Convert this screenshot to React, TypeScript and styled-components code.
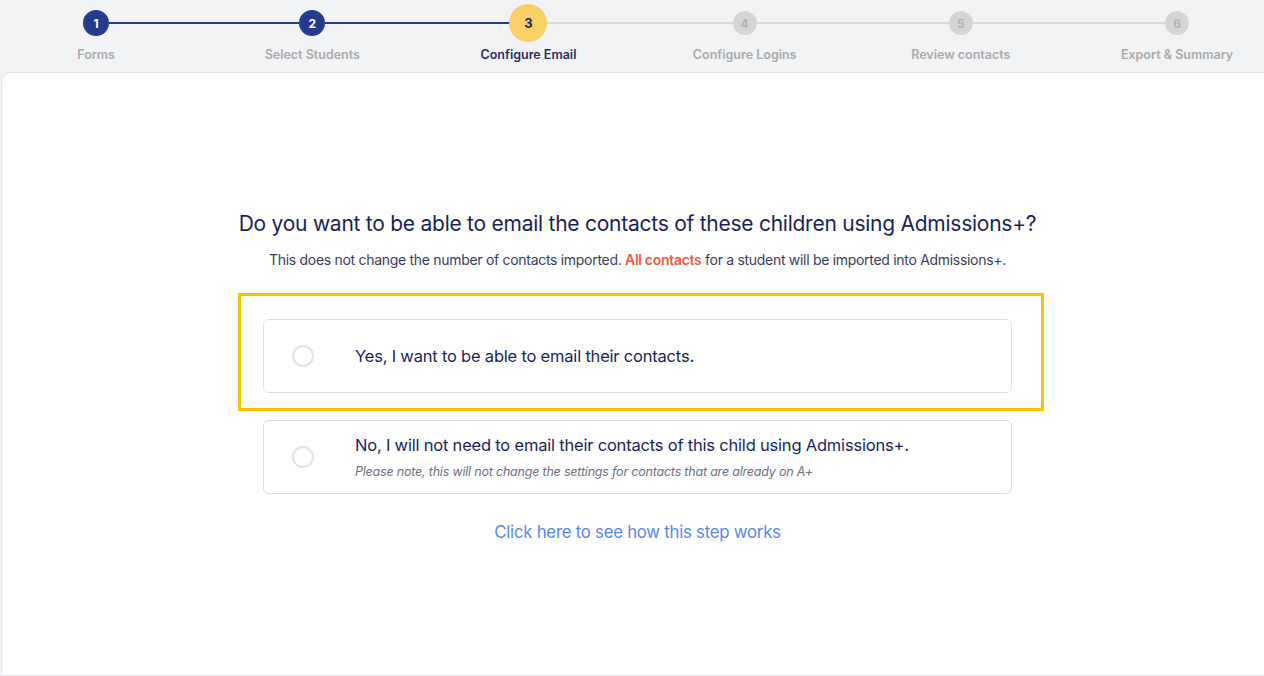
import React from 'react';
import styled, { createGlobalStyle } from 'styled-components';

const GlobalStyle = createGlobalStyle`
  html, body {
    margin: 0;
    padding: 0;
    background: #f2f3f5;
    font-family: Inter, "Noto Sans", sans-serif;
    overflow: hidden;
  }
`;

type StepState = 'done' | 'active' | 'todo';

interface Step {
  label: string;
  state: StepState;
}

const steps: Step[] = [
  { label: 'Forms', state: 'done' },
  { label: 'Select Students', state: 'done' },
  { label: 'Configure Email', state: 'active' },
  { label: 'Configure Logins', state: 'todo' },
  { label: 'Review contacts', state: 'todo' },
  { label: 'Export & Summary', state: 'todo' },
];

const Page = styled.div`
  width: 1264px;
  height: 676px;
  display: flex;
  flex-direction: column;
  background: #f2f3f5;
`;

const Stepper = styled.div`
  height: 72px;
  margin-left: -12px;
  display: grid;
  grid-template-columns: repeat(6, 216.2px);
`;

const StepItem = styled.div<{ $next?: StepState; $state: StepState }>`
  position: relative;
  display: flex;
  flex-direction: column;
  align-items: center;

  &::after {
    content: '';
    display: ${p => (p.$next ? 'block' : 'none')};
    position: absolute;
    top: 22px;
    left: 50%;
    width: 100%;
    height: 2px;
    background: ${p => (p.$next === 'todo' ? '#d9d9d9' : '#26398c')};
    z-index: 0;
  }
`;

const CircleRow = styled.div`
  height: 46px;
  display: flex;
  align-items: center;
  justify-content: center;
`;

const Circle = styled.div<{ $state: StepState }>`
  position: relative;
  z-index: 1;
  width: ${p => (p.$state === 'active' ? 38 : p.$state === 'done' ? 26 : 24)}px;
  height: ${p => (p.$state === 'active' ? 38 : p.$state === 'done' ? 26 : 24)}px;
  border-radius: 50%;
  display: flex;
  align-items: center;
  justify-content: center;
  font-size: ${p => (p.$state === 'active' ? 13 : 12)}px;
  font-weight: 700;
  background: ${p =>
    p.$state === 'done' ? '#243a8c' : p.$state === 'active' ? '#f9d066' : '#d6d6d6'};
  color: ${p =>
    p.$state === 'done' ? '#ffffff' : p.$state === 'active' ? '#1e2352' : '#b3b3b3'};
`;

const StepLabel = styled.div<{ $state: StepState }>`
  margin-top: 1px;
  font-size: 12.5px;
  font-weight: 600;
  color: ${p => (p.$state === 'active' ? '#2a2e5e' : '#aaaaaa')};
  white-space: nowrap;
`;

const Card = styled.div`
  flex: 1;
  margin-left: 1px;
  margin-right: -10px;
  background: #ffffff;
  border: 1px solid #e4e5e8;
  border-radius: 10px 10px 0 0;
  display: flex;
  flex-direction: column;
  align-items: center;
  padding: 138px 0 0 0;
`;

const Title = styled.h1`
  margin: 0;
  font-size: 21px;
  font-weight: 400;
  color: #1b1f58;
  letter-spacing: -0.25px;
`;

const Subtitle = styled.p`
  margin: 15px 0 0 0;
  font-size: 14px;
  color: #3a3d5e;
  letter-spacing: -0.3px;
`;

const Accent = styled.span`
  color: #f0593b;
  font-weight: 600;
`;

const Highlight = styled.div`
  margin: 25px 0 0 7px;
  border: 3px solid #f7c600;
  padding: 23px 29px 15px 22px;
`;

const Option = styled.label`
  width: 749px;
  height: 74px;
  box-sizing: border-box;
  border: 1.5px solid #dedede;
  border-radius: 6px;
  display: flex;
  align-items: center;
  padding-left: 28px;
  cursor: pointer;
  background: #fff;
`;

const SecondOption = styled(Option)`
  margin-top: 9px;
`;

const Radio = styled.span`
  width: 22px;
  height: 22px;
  box-sizing: border-box;
  border: 2px solid #e3e3e3;
  border-radius: 50%;
  flex-shrink: 0;
`;

const OptionText = styled.div`
  margin-left: 41px;
  display: flex;
  flex-direction: column;
`;

const OptionTitle = styled.span`
  font-size: 16.5px;
  color: #1b1f58;
  letter-spacing: -0.2px;
`;

const OptionNote = styled.span`
  margin-top: 9px;
  font-size: 12.5px;
  font-style: italic;
  color: #6c6f83;
  letter-spacing: -0.2px;
`;

const HelpLink = styled.a`
  margin-top: 28px;
  font-size: 16.8px;
  color: #5a86f0;
  text-decoration: none;
  letter-spacing: -0.25px;
  cursor: pointer;
`;

const App: React.FC = () => {
  return (
    <>
      <GlobalStyle />
      <Page>
        <Stepper>
          {steps.map((s, i) => (
            <StepItem key={s.label} $state={s.state} $next={steps[i + 1]?.state}>
              <CircleRow>
                <Circle $state={s.state}>{i + 1}</Circle>
              </CircleRow>
              <StepLabel $state={s.state}>{s.label}</StepLabel>
            </StepItem>
          ))}
        </Stepper>
        <Card>
          <Title>Do you want to be able to email the contacts of these children using Admissions+?</Title>
          <Subtitle>
            This does not change the number of contacts imported. <Accent>All contacts</Accent> for a
            student will be imported into Admissions+.
          </Subtitle>
          <Highlight>
            <Option>
              <Radio />
              <OptionText>
                <OptionTitle>Yes, I want to be able to email their contacts.</OptionTitle>
              </OptionText>
            </Option>
          </Highlight>
          <SecondOption>
            <Radio />
            <OptionText>
              <OptionTitle>No, I will not need to email their contacts of this child using Admissions+.</OptionTitle>
              <OptionNote>Please note, this will not change the settings for contacts that are already on A+</OptionNote>
            </OptionText>
          </SecondOption>
          <HelpLink>Click here to see how this step works</HelpLink>
        </Card>
      </Page>
    </>
  );
};

export default App;
